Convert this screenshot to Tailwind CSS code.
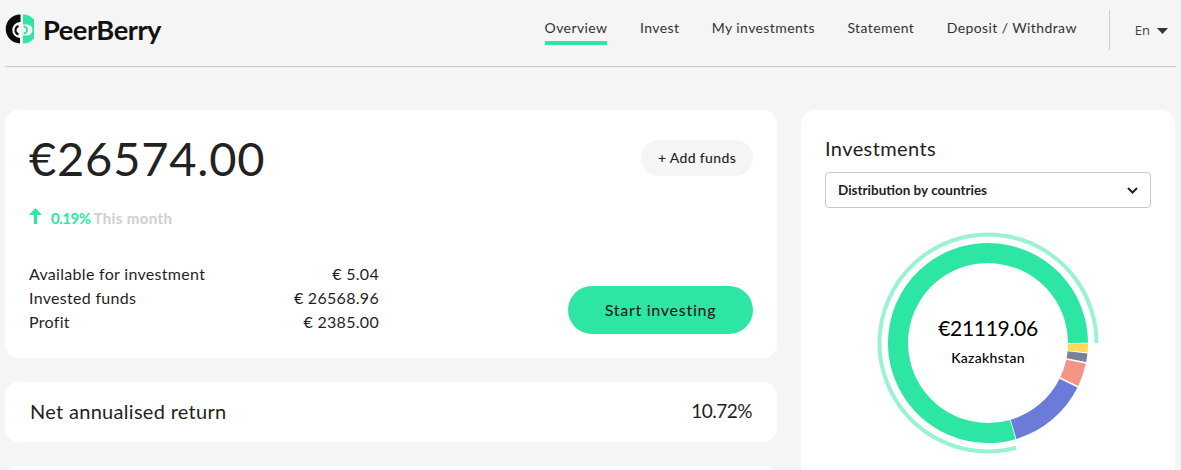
<!DOCTYPE html>
<html lang="en">
<head>
    <meta charset="UTF-8" />
    <title>PeerBerry</title>
    <script src="https://cdn.jsdelivr.net/npm/@tailwindcss/browser@4"></script>
</head>
<body class="bg-[#f5f5f5] font-['Lato',sans-serif] text-[#1f1f1f]">
    <div class="h-[470px] overflow-hidden px-[5px]">
        <!-- Header -->
        <header class="flex items-center justify-between h-[67px] border-b border-[#c8c8c8]">
            <div class="flex items-center gap-[9px] mb-[8px]">
                <svg width="29" height="30" viewBox="0 0 29 30">
                    <path d="M15.500 0.500A14.500 14.500 0 0 0 15 29.500V24A8 8 0 0 1 15.500 8Z" fill="#0b0b0b"/>
                    <path d="M18 0.500A14.500 14.500 0 0 1 18 29.500V21.500H22A5.500 5.500 0 0 0 22 10.500H18Z" fill="#2ee6a4"/>
                    <path d="M13.500 12A4.500 4.500 0 0 0 13.500 20.500" fill="none" stroke="#0b0b0b" stroke-width="2"/>
                    <path d="M18.500 12.500A3.500 3.500 0 0 1 18.500 19.500" fill="none" stroke="#2ee6a4" stroke-width="2"/>
                </svg>
                <span class="text-[27.3px] font-bold tracking-[-0.5px] text-[#111] mt-[2px]">PeerBerry</span>
            </div>
            <div class="flex items-center h-[40px] mt-[-6px]">
                <nav class="flex items-start gap-[32.500px] text-[14px] tracking-[0.4px] text-[#333]">
                    <a class="pb-[3px] border-b-[4px] border-[#2ee6a4] mt-[2px]">Overview</a>
                    <a class="mt-[2px]">Invest</a>
                    <a class="mt-[2px]">My investments</a>
                    <a class="mt-[2px]">Statement</a>
                    <a class="mt-[2px]">Deposit / Withdraw</a>
                </nav>
                <div class="w-px h-[40px] bg-[#d0d0d0] ml-[32px] mr-[25px]"></div>
                <div class="flex items-center gap-[7px] text-[14px] text-[#444] mr-[8px] mt-[2px]">
                    <span class="font-['Open_Sans',sans-serif] text-[13px]">En</span>
                    <svg width="11" height="6" viewBox="0 0 11 6"><path d="M0 0H11L5.500 6Z" fill="#333"/></svg>
                </div>
            </div>
        </header>

        <main class="flex gap-[24px] mt-[43px]">
            <!-- Left column -->
            <div class="w-[772px] flex flex-col gap-[24px]">
                <section class="bg-white rounded-[14px] h-[248px] px-[24px] pt-[18px]">
                    <div class="flex items-start justify-between">
                        <p class="text-[47px] leading-[60px] tracking-[0.8px] text-[#222]">€26574.00</p>
                        <button class="mt-[12px] h-[36px] w-[112px] pb-[2px] rounded-full bg-[#f5f5f5] text-[14px] font-medium tracking-[0.35px]">+ Add funds</button>
                    </div>
                    <div class="flex items-center mt-[19px] text-[15px] font-bold">
                        <svg class="mr-[9px] mb-[4px]" width="13" height="16" viewBox="0 0 13 16"><path d="M6.500 0L13 7H8V16H5V7H0Z" fill="#2ee6a4"/></svg>
                        <span class="text-[#2ee6a4] tracking-[-0.5px]">0.19%</span>
                        <span class="ml-[3px] text-[#cfcfcf] tracking-[0.4px]">This month</span>
                    </div>
                    <div class="flex items-end justify-between mt-[32px]">
                        <dl class="w-[350px] text-[16px] leading-[24px] tracking-[0.3px]">
                            <div class="flex justify-between"><dt>Available for investment</dt><dd>€ 5.04</dd></div>
                            <div class="flex justify-between"><dt>Invested funds</dt><dd>€ 26568.96</dd></div>
                            <div class="flex justify-between"><dt>Profit</dt><dd>€ 2385.00</dd></div>
                        </dl>
                        <button class="w-[185px] h-[48px] rounded-full bg-[#2ee6a4] text-[16px] font-medium tracking-[0.7px]">Start investing</button>
                    </div>
                </section>
                <section class="bg-white rounded-[14px] h-[60px] pl-[25px] pr-[25px] pb-[2px] flex items-center justify-between text-[20px] tracking-[0.3px]">
                    <span>Net annualised return</span>
                    <span class="text-[19px] tracking-[-0.5px]">10.72%</span>
                </section>
                <section class="bg-white rounded-[14px] h-[60px]"></section>
            </div>

            <!-- Right column -->
            <aside class="w-[374px] h-[420px] bg-white rounded-[14px] px-[24px] pt-[26px]">
                <h2 class="text-[20px] leading-[24px] tracking-[0.4px]">Investments</h2>
                <div class="mt-[12px] h-[36px] border border-[#c9c9c9] rounded-[4px] flex items-center justify-between px-[12px] text-[13.5px] font-bold">
                    <span>Distribution by countries</span>
                    <svg width="11" height="7" viewBox="0 0 11 7"><path d="M1 1L5.500 5.500L10 1" fill="none" stroke="#222" stroke-width="2"/></svg>
                </div>
                <!-- Donut -->
                <div class="relative w-[222px] h-[222px] mt-[24px] ml-[52px]">
                    <svg width="222" height="222" viewBox="-111 -111 222 222">
                        <circle r="108.500" fill="none" stroke="#99f2d2" stroke-width="4" pathLength="360" stroke-dasharray="285 360" transform="rotate(75)"/>
                        <circle r="90" fill="none" stroke="#2ee6a4" stroke-width="20" pathLength="360" stroke-dasharray="286 360" transform="rotate(74)"/>
                        <circle r="90" fill="none" stroke="#6b7bd8" stroke-width="20" pathLength="360" stroke-dasharray="47 360" transform="rotate(26.500)"/>
                        <circle r="90" fill="none" stroke="#f59484" stroke-width="20" pathLength="360" stroke-dasharray="13.500 360" transform="rotate(12)"/>
                        <circle r="90" fill="none" stroke="#7a8198" stroke-width="20" pathLength="360" stroke-dasharray="5 360" transform="rotate(6)"/>
                        <circle r="90" fill="none" stroke="#ffd855" stroke-width="20" pathLength="360" stroke-dasharray="5 360" transform="rotate(0.500)"/>
                    </svg>
                    <div class="absolute inset-0 flex flex-col items-center justify-center pb-[6px]">
                        <p class="text-[21px] leading-[30px] tracking-[-0.3px] text-black">€21119.06</p>
                        <p class="text-[14px] font-medium mt-[4px] tracking-[0.3px] text-black">Kazakhstan</p>
                    </div>
                </div>
            </aside>
        </main>
    </div>
</body>
</html>
